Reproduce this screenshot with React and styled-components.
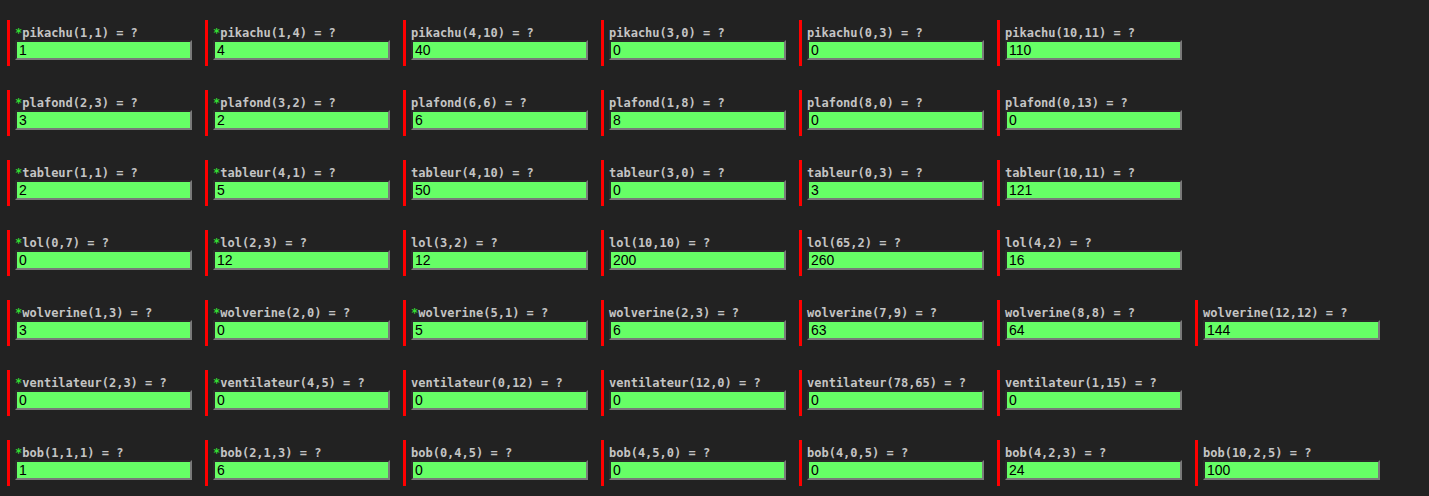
import styled, { createGlobalStyle } from "styled-components";

const GlobalStyle = createGlobalStyle`
  html, body {
    margin: 0;
    padding: 0;
    background: #222222;
  }
`;

const Page = styled.div`
  padding: 20px 0 0 7px;
  min-height: 100vh;
  box-sizing: border-box;
  background: #222222;
`;

const Row = styled.div`
  display: flex;
  margin-bottom: 24px;
`;

const Cell = styled.div`
  border-left: 3px solid #ff0000;
  padding: 4px 0 6px 5px;
  margin-right: 13px;
  display: flex;
  flex-direction: column;
`;

const Label = styled.div`
  font-family: "DejaVu Sans Mono", monospace;
  font-weight: bold;
  font-size: 12px;
  line-height: 19px;
  height: 16px;
  color: #c4c4c4;
  white-space: pre;
`;

const Star = styled.span`
  color: #33dd33;
`;

const Answer = styled.input`
  width: 177px;
  height: 20px;
  box-sizing: border-box;
  margin: 0;
  padding: 0 2px;
  background: #66ff66;
  color: #000;
  font-family: "Liberation Sans", Arial, sans-serif;
  font-size: 14px;
  border-style: solid;
  border-width: 2px;
  border-color: #2a2a2a #7a7a7a #7a7a7a #2a2a2a;
  outline: none;
`;

const rows = [
  [["pikachu(1,1)", "1", 1], ["pikachu(1,4)", "4", 1], ["pikachu(4,10)", "40"], ["pikachu(3,0)", "0"], ["pikachu(0,3)", "0"], ["pikachu(10,11)", "110"]],
  [["plafond(2,3)", "3", 1], ["plafond(3,2)", "2", 1], ["plafond(6,6)", "6"], ["plafond(1,8)", "8"], ["plafond(8,0)", "0"], ["plafond(0,13)", "0"]],
  [["tableur(1,1)", "2", 1], ["tableur(4,1)", "5", 1], ["tableur(4,10)", "50"], ["tableur(3,0)", "0"], ["tableur(0,3)", "3"], ["tableur(10,11)", "121"]],
  [["lol(0,7)", "0", 1], ["lol(2,3)", "12", 1], ["lol(3,2)", "12"], ["lol(10,10)", "200"], ["lol(65,2)", "260"], ["lol(4,2)", "16"]],
  [["wolverine(1,3)", "3", 1], ["wolverine(2,0)", "0", 1], ["wolverine(5,1)", "5", 1], ["wolverine(2,3)", "6"], ["wolverine(7,9)", "63"], ["wolverine(8,8)", "64"], ["wolverine(12,12)", "144"]],
  [["ventilateur(2,3)", "0", 1], ["ventilateur(4,5)", "0", 1], ["ventilateur(0,12)", "0"], ["ventilateur(12,0)", "0"], ["ventilateur(78,65)", "0"], ["ventilateur(1,15)", "0"]],
  [["bob(1,1,1)", "1", 1], ["bob(2,1,3)", "6", 1], ["bob(0,4,5)", "0"], ["bob(4,5,0)", "0"], ["bob(4,0,5)", "0"], ["bob(4,2,3)", "24"], ["bob(10,2,5)", "100"]],
];

function App() {
  return (
    <Page>
      <GlobalStyle />
      {rows.map((row, i) => (
        <Row key={i}>
          {row.map(([expr, value, starred]) => (
            <Cell key={expr}>
              <Label>
                {starred && <Star>*</Star>}
                {expr} = ?
              </Label>
              <Answer type="text" readOnly value={value} />
            </Cell>
          ))}
        </Row>
      ))}
    </Page>
  );
}

export default App;
